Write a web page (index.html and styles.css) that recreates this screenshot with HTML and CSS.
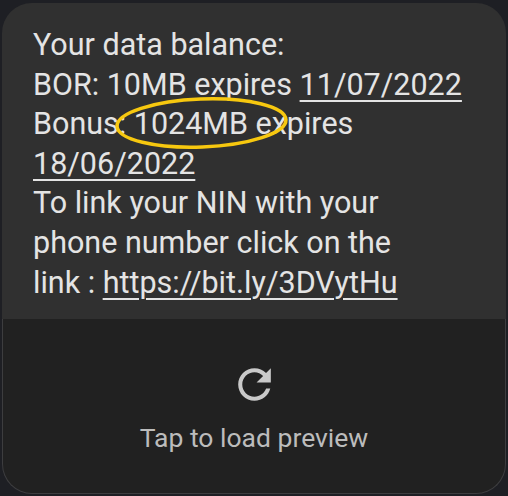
FILE: index.html
```html
<!DOCTYPE html>
<html>
<head>
<meta charset="utf-8">
<link rel="stylesheet" href="styles.css">
</head>
<body>
<div class="card">
  <div class="msg">
    <p class="text">Your data balance:<br>BOR: 10MB expires <span class="u">11/07/2022</span><br>Bonus: 1024MB expires<br><span class="u">18/06/2022</span><br>To link your NIN with your<br>phone number click on the<br>link : <span class="u">https://bit.ly/3DVytHu</span></p>
    <svg class="circle" width="184" height="66" viewBox="0 0 184 66"><ellipse cx="89.5" cy="33" rx="84.5" ry="24" transform="rotate(-2.2 89.5 33)" fill="none" stroke="#f7c80f" stroke-width="3.5"/></svg>
  </div>
  <div class="preview">
    <svg class="icon" width="49" height="49" viewBox="0 0 24 24"><path fill="#c9c9c9" d="M17.65 6.35C16.2 4.9 14.21 4 12 4c-4.42 0-7.99 3.58-7.99 8s3.57 8 7.99 8c3.73 0 6.84-2.55 7.73-6h-2.08c-.82 2.33-3.04 4-5.65 4-3.31 0-6-2.69-6-6s2.69-6 6-6c1.66 0 3.14.69 4.22 1.78L13 11h7V4l-2.35 2.35z"/></svg>
    <div class="label">Tap to load preview</div>
  </div>
</div>
</body>
</html>
```
FILE: styles.css
```css
html, body {
  margin: 0;
  padding: 0;
  background: #1e1f24;
  width: 508px;
  height: 496px;
  overflow: hidden;
}
.card {
  margin: 3px 2px 0 2px;
  width: 504px;
  font-family: Roboto, "Noto Sans", sans-serif;
}
.msg {
  position: relative;
  background: #303030;
  border-radius: 30px 30px 0 0;
  height: 316px;
  box-sizing: border-box;
  padding: 22px 10px 0 31px;
}
.text {
  margin: 0;
  color: #e4e4e4;
  font-size: 30.5px;
  line-height: 39.6px;
  white-space: nowrap;
}
.u {
  text-decoration: underline;
  text-decoration-thickness: 2px;
  text-underline-offset: 5px;
}
.circle {
  position: absolute;
  left: 110px;
  top: 87px;
}
.preview {
  background: #212121;
  height: 175px;
  box-sizing: border-box;
  border: 1px solid #3d3d3f;
  border-top: none;
  border-radius: 0 0 30px 30px;
  display: flex;
  flex-direction: column;
  align-items: center;
  padding-top: 41px;
}
.icon {
  display: block;
}
.label {
  margin-top: 13px;
  color: #bcbcbc;
  font-size: 26.5px;
}
```
